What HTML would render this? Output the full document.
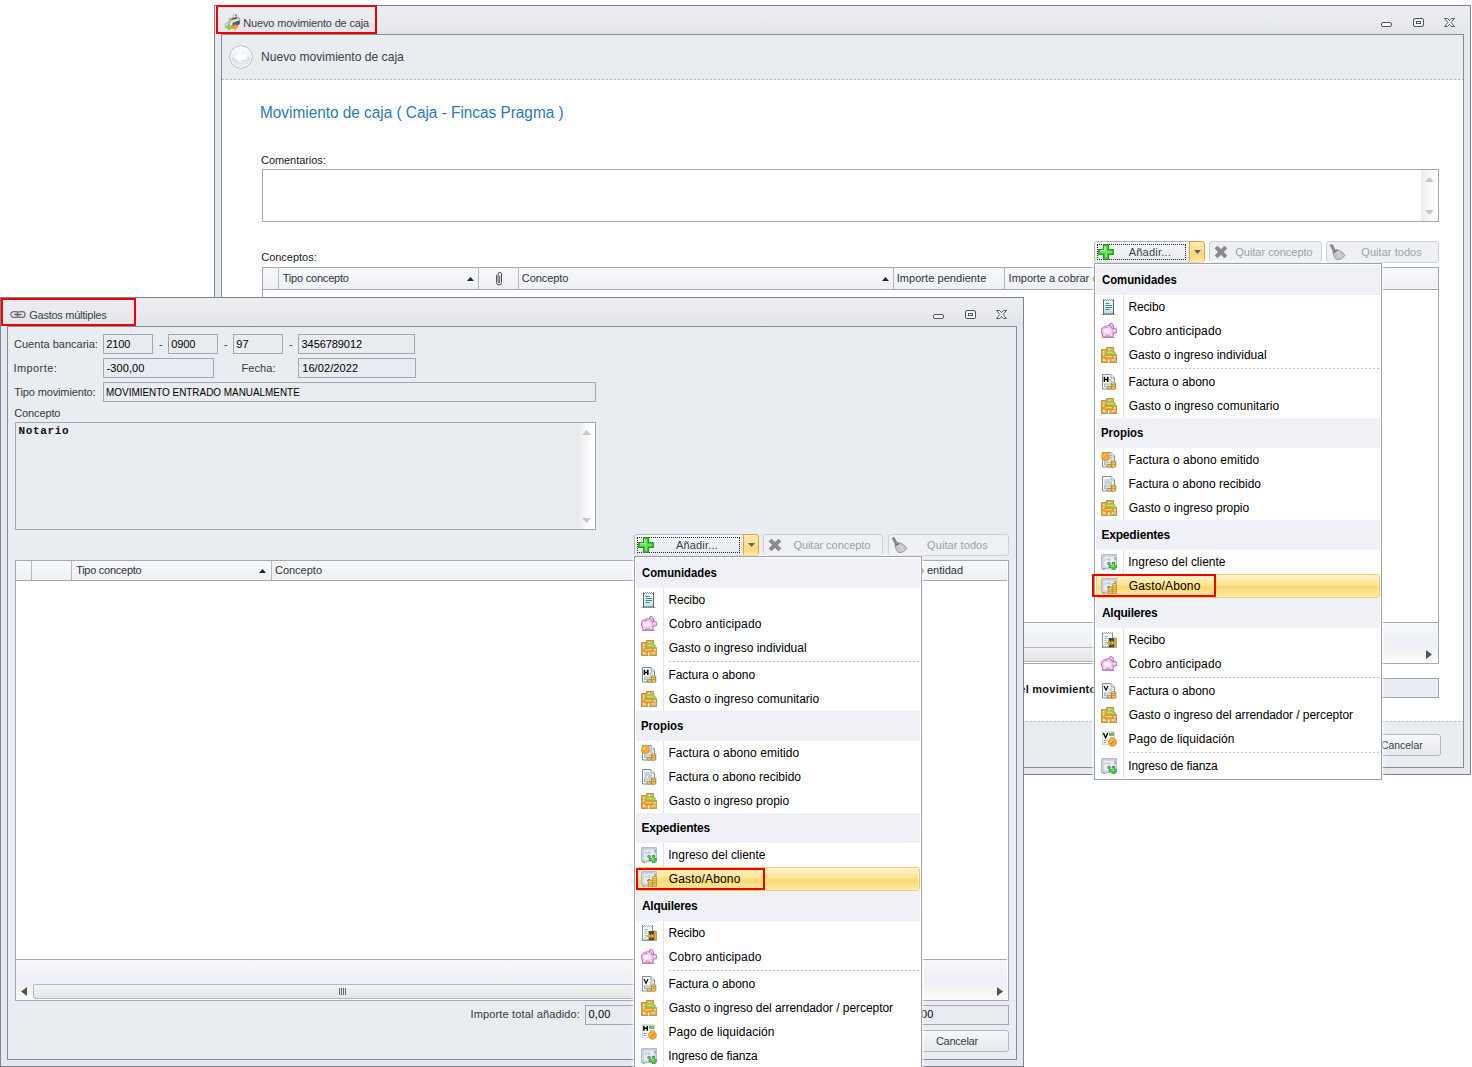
<!DOCTYPE html>
<html><head><meta charset="utf-8"><title>Nuevo movimiento de caja</title>
<style>
html,body{margin:0;padding:0;background:#fff;}
body{width:1472px;height:1067px;position:relative;overflow:hidden;font-family:"Liberation Sans",sans-serif;}
div,span,svg{position:absolute;box-sizing:border-box;}
.t{white-space:pre;line-height:1;}
.win{border:1px solid #7e848c;background:linear-gradient(#ecedf1 0px,#e9ebef 12px,#e2e5e9 27px,#e5e8ec 29px,#e5e8ec 100%);}
.inner{border:1px solid #888d95;background:#e9ecf0;overflow:hidden;}
.fld{border:1px solid #a2a8b1;background:#e8ebef;}
.grid{border:1px solid #a4aab3;background:#fff;overflow:hidden;}
.gh{background:linear-gradient(#f7f8fa,#eef0f4);border-bottom:1px solid #a4aab3;}
.gc{border-right:1px solid #b4bac3;top:0;height:100%;}
.btn{border:1px solid #b3b8c0;border-radius:3px;background:linear-gradient(#f8f9fb,#eef0f3 50%,#e6e9ed);}
.btnd{border:1px solid #cdd1d7;border-radius:3px;background:#eef0f3;}
.menu{border:1px solid #9da3ab;background:#fff;box-shadow:0 0 3px 1px rgba(255,255,255,.85);}
.mh{background:#eff1f6;}
.hl{border:1px solid #f3cd60;border-radius:3px;background:linear-gradient(#fef3cc,#fce392 45%,#fbd96f 55%,#fdeaa8);box-shadow:inset 0 0 0 1px rgba(255,255,255,.35);}
.sep{border-top:1px dashed #c5c9cf;height:0;}
.red{border:2px solid #f00000;}
</style></head>
<body>
<div class="win" style="left:214px;top:5px;width:1257px;height:770px;"><div style="left:9px;top:8px;width:17px;height:17px"><svg width="17" height="17" viewBox="0 0 16 16.5"><path d="M8.8 .5h3v4h-3z" fill="#eef1f6" stroke="#9aa3b3" stroke-width=".7"/><rect x="10.8" y="1" width="1.5" height="1.2" fill="#5d6675"/><path d="M4 5l8-2 3 1.5-8 2.5z" fill="#eccf72" stroke="#b48f2e" stroke-width=".7"/><path d="M7 5.2l5-1.3" stroke="#3d4a3a" stroke-width="1.4"/><path d="M1 9.5l6-3.5 8-2v5l-7 3.5-7 .5z" fill="#e3e8f0" stroke="#8f9bb0" stroke-width=".7"/><path d="M8 8.5l7-2.5v4l-7 3z" fill="#4e5a6b"/><path d="M3 9l1.5-.8M5 8l1.5-.8M4 10l1.5-.8" stroke="#8794a8" stroke-width=".8"/><path d="M1.5 12.5l3.5-3v2h3.2v2.5h-3.2v2z" fill="#9fd43e" stroke="#72a51f" stroke-width=".5"/><path d="M13.5 12.2l-3.5-3v2h-2.5v2.5h2.5v2z" fill="#f2a52e" stroke="#c47c15" stroke-width=".5"/></svg></div><span class="t" style="left:28.30px;top:12px;font-size:11px;color:#3a3f47;letter-spacing:-0.166px;">Nuevo movimiento de caja</span><div style="left:1166px;top:16px;width:11px;height:5px;border:1px solid #50555c;border-radius:2px;background:#fff;"></div><div style="left:1198px;top:12px;width:11px;height:9px;border:1px solid #50555c;border-radius:2px;background:#f4f5f7;"><div style="left:2px;top:2px;width:5px;height:3px;border:1px solid #50555c;background:#fff;"></div></div><svg style="left:1228px;top:11px" width="13" height="11" viewBox="0 0 13 11"><path d="M1.500 1.500h3l2 2.200 2-2.200h3l-3.500 4 3.500 4h-3l-2-2.200-2 2.200h-3l3.500-4z" fill="#fff" stroke="#50555c" stroke-width="1" stroke-linejoin="round"/></svg><div class="inner" style="left:6px;top:28px;width:1243px;height:734px;"><div style="left:0px;top:0px;width:1241px;height:45px;background:#e9ecf0;"></div><div style="left:0px;top:45px;width:1241px;height:641px;background:#fff;"></div><div style="left:0px;top:687px;width:1241px;height:50px;background:#e9ecf0;"></div><div style="left:0px;top:44px;width:1241px;height:1px;background:repeating-linear-gradient(90deg,#b4b9c0 0,#b4b9c0 2px,transparent 2px,transparent 4px);height:1px;"></div><div style="left:0px;top:686px;width:1241px;height:1px;background:repeating-linear-gradient(90deg,#b4b9c0 0,#b4b9c0 2px,transparent 2px,transparent 4px);height:1px;"></div><div style="left:7px;top:10px;width:24px;height:24px"><svg width="24" height="24" viewBox="0 0 24 24"><defs><linearGradient id="bg1" x1="0" y1="0" x2="0" y2="1"><stop offset="0" stop-color="#fbfcfd"/><stop offset=".5" stop-color="#eef1f5"/><stop offset=".52" stop-color="#dde4ec"/><stop offset="1" stop-color="#e9eef3"/></linearGradient></defs><circle cx="12" cy="12" r="11.2" fill="url(#bg1)" stroke="#b5bcc5" stroke-width="1"/><circle cx="12" cy="12" r="10.2" fill="none" stroke="#fff" stroke-width=".9" opacity=".9"/><path d="M5.5 12.3l6-5.3v3.2h6.2v4.2h-6.2v3.2z" fill="#b9c0c9" opacity=".8" transform="translate(.5 .9)"/><path d="M5.5 12.3l6-5.3v3.2h6.2v4.2h-6.2v3.2z" fill="#fff" stroke="#fff" stroke-width=".8" stroke-linejoin="round"/></svg></div><span class="t" style="left:39.03px;top:15px;font-size:13px;color:#3b3f46;transform:scaleX(0.9320);transform-origin:1.07px 0;">Nuevo movimiento de caja</span><span class="t" style="left:38.09px;top:70px;font-size:16px;color:#2a7ab8;transform:scaleX(0.9588);transform-origin:1.31px 0;">Movimiento de caja ( Caja - Fincas Pragma )</span><span class="t" style="left:39.04px;top:120px;font-size:11px;color:#1c1c1c;letter-spacing:-0.068px;">Comentarios:</span><div style="left:40px;top:134px;width:1177px;height:53px;border:1px solid #a2a8b1;background:#fff;"><div style="left:1158px;top:0px;width:17px;height:51px;background:linear-gradient(90deg,#ececee,#fafafa 60%,#fff);"></div><svg style="left:1162px;top:7px" width="9" height="5"><path d="M0 5l4.500-5 4.500 5z" fill="#c6c6c6"/></svg><svg style="left:1162px;top:40px" width="9" height="5"><path d="M0 0l4.500 5 4.500-5z" fill="#c6c6c6"/></svg></div><span class="t" style="left:39.24px;top:217px;font-size:11px;color:#1c1c1c;letter-spacing:-0.020px;">Conceptos:</span><div class="btn" style="left:872px;top:206px;width:96px;height:22px;border-radius:3px 0 0 3px;"><div style="left:2px;top:2px;width:89px;height:16px;border:1px dotted #222;"></div><div style="left:3px;top:2px;width:16px;height:16px"><svg width="16" height="16" viewBox="0 0 16 16"><path d="M5.5 .7h5v4.8h4.8v5h-4.8v4.8h-5v-4.8h-4.8v-5h4.8z" fill="#3fcb34" stroke="#1f9a1b" stroke-width="1.2" stroke-linejoin="round"/><path d="M7 2.2h2v4.8h4.8v2h-4.8v4.8h-2v-4.8h-4.8v-2h4.8z" fill="#8be67f" opacity=".75"/><path d="M6.7 2v4.7h-4.7" stroke="#c9f8bd" stroke-width="1" fill="none" opacity=".9"/></svg></div></div><div style="left:967px;top:206px;width:16px;height:22px;border:1px solid #e3a341;border-radius:0 3px 3px 0;background:linear-gradient(#ffebb0,#ffdf8c 48%,#ffd874 55%,#ffe398);"><svg style="left:4px;top:8px" width="8" height="5"><path d="M0 0h7l-3.500 4z" fill="#5b6270"/></svg></div><div class="btnd" style="left:987px;top:206px;width:113px;height:22px;"><div style="left:4px;top:3px;width:14px;height:14px"><svg width="14" height="14" viewBox="0 0 14 13.5"><path d="M1 3.2l2.5-2.5 3.5 3.5 3.5-3.5 2.5 2.5-3.5 3.5 3.5 3.5-2.5 2.5-3.5-3.5-3.5 3.5-2.5-2.5 3.5-3.5z" fill="#8a8a8a" stroke="#7d7d7d" stroke-width=".5"/></svg></div></div><div class="btnd" style="left:1104px;top:206px;width:113px;height:22px;"><div style="left:2px;top:2px;width:17px;height:17px"><svg width="17" height="17" viewBox="0 0 17 17"><path d="M1 1.2l2.2-1 3.3 6-2.2 1.2z" fill="#8b8b8b" stroke="#777" stroke-width=".5"/><path d="M3.8 7.8l3.8-2.2c3 .3 6.4 2.6 8.2 5.8-1.6 2.8-4.8 4.5-8.3 4.4-2-2-3.3-5-3.7-8z" fill="#c6c6c6" stroke="#8d8d8d" stroke-width=".8"/><path d="M4.3 8.6l3.8-2.2" stroke="#6f6f6f" stroke-width="1.3"/><path d="M8 8c2 1.5 3.5 3.5 4 6" stroke="#e2e2e2" stroke-width="1" fill="none"/></svg></div></div><span class="t" style="left:906.68px;top:212px;font-size:11px;color:#3a3f47;letter-spacing:0.233px;">Añadir...</span><span class="t" style="left:1013.28px;top:212px;font-size:11px;color:#9ba1ab;letter-spacing:-0.019px;">Quitar concepto</span><span class="t" style="left:1139.28px;top:212px;font-size:11px;color:#9ba1ab;letter-spacing:0.054px;">Quitar todos</span><div class="grid" style="left:40px;top:232px;width:1177px;height:397px;"><div class="gh" style="left:0px;top:0px;width:1175px;height:22px;"><div class="gc" style="left:0px;top:0px;width:16px;height:21px;"></div><div class="gc" style="left:16px;top:0px;width:200px;height:21px;"></div><div class="gc" style="left:216px;top:0px;width:40px;height:21px;"></div><div class="gc" style="left:256px;top:0px;width:375px;height:21px;"></div><div class="gc" style="left:631px;top:0px;width:111px;height:21px;"></div><span class="t" style="left:19.75px;top:5px;font-size:11px;color:#2f343b;letter-spacing:-0.208px;">Tipo concepto</span><span class="t" style="left:258.84px;top:5px;font-size:11px;color:#2f343b;letter-spacing:-0.067px;">Concepto</span><span class="t" style="left:633.68px;top:5px;font-size:11px;color:#2f343b;letter-spacing:0.058px;">Importe pendiente</span><span class="t" style="left:745.58px;top:5px;font-size:11px;color:#2f343b;">Importe a cobrar o pagar</span><svg style="left:204px;top:9px" width="7" height="4"><path d="M0 4l3.500-4 3.500 4z" fill="#222"/></svg><svg style="left:619px;top:9px" width="7" height="4"><path d="M0 4l3.500-4 3.500 4z" fill="#222"/></svg><div style="left:230px;top:3px;width:12px;height:15px"><svg width="12" height="15" viewBox="0 0 12 15"><path d="M3.5 4v7.5a2.5 2.5 0 0 0 5 0V3a1.7 1.7 0 0 0-3.4 0v8a.8.8 0 0 0 1.6 0V4.5" fill="none" stroke="#555" stroke-width="1"/></svg></div></div><div style="left:0px;top:354px;width:1175px;height:25px;border-top:1px solid #a4aab3;background:linear-gradient(#f5f7f9,#edf0f4);"></div><div style="left:0px;top:379px;width:1175px;height:16px;background:linear-gradient(#f1f1f2,#fcfcfc);"></div><div style="left:0px;top:379px;width:1040px;height:15px;border-right:1px solid #aeb3ba;border-radius:0 2px 2px 0;border-top:1px solid #aeb3ba;border-bottom:1px solid #aeb3ba;background:linear-gradient(#f2f2f2,#e4e4e4);"></div><svg style="left:1163px;top:382px" width="6" height="9"><path d="M0 0l6 4.500-6 4.500z" fill="#555"/></svg></div><span class="t" style="left:717.16px;top:649px;font-size:11px;color:#111;font-weight:700;letter-spacing:.25px;">Importe total del movimiento:</span><div class="fld" style="left:878px;top:643px;width:339px;height:20px;"></div><div class="btn" style="left:1143px;top:699px;width:76px;height:22px;"></div><span class="t" style="left:1159.14px;top:705px;font-size:11px;color:#3a3f47;transform:scaleX(0.9459);transform-origin:0.56px 0;">Cancelar</span></div></div>
<div class="red" style="left:216px;top:5px;width:161px;height:29px;"></div>
<div class="win" style="left:0px;top:297px;width:1024px;height:770px;"><div style="left:9px;top:13px;width:17px;height:8px"><svg width="16" height="7" viewBox="0 0 15.5 7"><rect x=".6" y=".6" width="8" height="5.8" rx="2.9" fill="#e6e6e6" stroke="#6e6e6e" stroke-width="1.2"/><rect x="6.9" y=".6" width="8" height="5.8" rx="2.9" fill="#e6e6e6" stroke="#6e6e6e" stroke-width="1.2"/><path d="M4.2 3.5h7" stroke="#5e5e5e" stroke-width="1.5"/></svg></div><span class="t" style="left:28.25px;top:12px;font-size:11px;color:#3a3f47;letter-spacing:-0.257px;">Gastos múltiples</span><div style="left:932px;top:16px;width:11px;height:5px;border:1px solid #50555c;border-radius:2px;background:#fff;"></div><div style="left:964px;top:12px;width:11px;height:9px;border:1px solid #50555c;border-radius:2px;background:#f4f5f7;"><div style="left:2px;top:2px;width:5px;height:3px;border:1px solid #50555c;background:#fff;"></div></div><svg style="left:994px;top:11px" width="13" height="11" viewBox="0 0 13 11"><path d="M1.500 1.500h3l2 2.200 2-2.200h3l-3.500 4 3.500 4h-3l-2-2.200-2 2.200h-3l3.500-4z" fill="#fff" stroke="#50555c" stroke-width="1" stroke-linejoin="round"/></svg><div class="inner" style="left:6px;top:28px;width:1010px;height:734px;"><span class="t" style="left:6.04px;top:12px;font-size:11px;color:#353a42;letter-spacing:0.012px;">Cuenta bancaria:</span><span class="t" style="left:5.58px;top:36px;font-size:11px;color:#353a42;letter-spacing:0.396px;">Importe:</span><span class="t" style="left:6.35px;top:60px;font-size:11px;color:#353a42;letter-spacing:-0.140px;">Tipo movimiento:</span><span class="t" style="left:6.24px;top:81px;font-size:11px;color:#353a42;letter-spacing:-0.124px;">Concepto</span><span class="t" style="left:233.60px;top:36px;font-size:11px;color:#353a42;letter-spacing:0.056px;">Fecha:</span><div class="fld" style="left:95px;top:7px;width:50px;height:20px;"></div><div class="fld" style="left:160px;top:7px;width:50px;height:20px;"></div><div class="fld" style="left:225px;top:7px;width:50px;height:20px;"></div><div class="fld" style="left:290px;top:7px;width:117px;height:20px;"></div><div class="fld" style="left:95px;top:31px;width:111px;height:20px;"></div><div class="fld" style="left:290px;top:31px;width:118px;height:20px;"></div><div class="fld" style="left:95px;top:55px;width:493px;height:20px;"></div><span class="t" style="left:98.35px;top:12px;font-size:11px;color:#000;letter-spacing:-0.163px;">2100</span><span class="t" style="left:163.17px;top:12px;font-size:11px;color:#000;letter-spacing:-0.070px;">0900</span><span class="t" style="left:228.28px;top:12px;font-size:11px;color:#000;">97</span><span class="t" style="left:293.58px;top:12px;font-size:11px;color:#000;letter-spacing:-0.078px;">3456789012</span><span class="t" style="left:98.41px;top:36px;font-size:11px;color:#000;letter-spacing:0.118px;">-300,00</span><span class="t" style="left:294.16px;top:36px;font-size:11px;color:#000;letter-spacing:0.104px;">16/02/2022</span><span class="t" style="left:97.60px;top:60px;font-size:11px;color:#000;transform:scaleX(0.9012);transform-origin:0.90px 0;">MOVIMIENTO ENTRADO MANUALMENTE</span><span class="t" style="left:151.01px;top:12px;font-size:11px;color:#353a42;">-</span><span class="t" style="left:216.01px;top:12px;font-size:11px;color:#353a42;">-</span><span class="t" style="left:281.01px;top:12px;font-size:11px;color:#353a42;">-</span><div style="left:7px;top:95px;width:581px;height:108px;border:1px solid #a2a8b1;background:#e8ebef;"><div style="left:562px;top:0px;width:17px;height:106px;background:linear-gradient(90deg,#e8ebef,#f7f8f9 50%,#fff 80%);"></div><svg style="left:566px;top:7px" width="9" height="5"><path d="M0 5l4.500-5 4.500 5z" fill="#c6c6c6"/></svg><svg style="left:566px;top:95px" width="9" height="5"><path d="M0 0l4.500 5 4.500-5z" fill="#c6c6c6"/></svg><span class="t" style="left:2.47px;top:3px;font-size:11px;color:#111;font-weight:700;font-family:'Liberation Mono',monospace;letter-spacing:0.635px;">Notario</span></div><div class="btn" style="left:626px;top:207px;width:110px;height:22px;border-radius:3px 0 0 3px;"><div style="left:2px;top:2px;width:103px;height:16px;border:1px dotted #222;"></div><div style="left:3px;top:2px;width:16px;height:16px"><svg width="16" height="16" viewBox="0 0 16 16"><path d="M5.5 .7h5v4.8h4.8v5h-4.8v4.8h-5v-4.8h-4.8v-5h4.8z" fill="#3fcb34" stroke="#1f9a1b" stroke-width="1.2" stroke-linejoin="round"/><path d="M7 2.2h2v4.8h4.8v2h-4.8v4.8h-2v-4.8h-4.8v-2h4.8z" fill="#8be67f" opacity=".75"/><path d="M6.7 2v4.7h-4.7" stroke="#c9f8bd" stroke-width="1" fill="none" opacity=".9"/></svg></div></div><div style="left:735px;top:207px;width:16px;height:22px;border:1px solid #e3a341;border-radius:0 3px 3px 0;background:linear-gradient(#ffebb0,#ffdf8c 48%,#ffd874 55%,#ffe398);"><svg style="left:4px;top:8px" width="8" height="5"><path d="M0 0h7l-3.500 4z" fill="#5b6270"/></svg></div><div class="btnd" style="left:755px;top:207px;width:120px;height:22px;"><div style="left:4px;top:3px;width:14px;height:14px"><svg width="14" height="14" viewBox="0 0 14 13.5"><path d="M1 3.2l2.5-2.5 3.5 3.5 3.5-3.5 2.5 2.5-3.5 3.5 3.5 3.5-2.5 2.5-3.5-3.5-3.5 3.5-2.5-2.5 3.5-3.5z" fill="#8a8a8a" stroke="#7d7d7d" stroke-width=".5"/></svg></div></div><div class="btnd" style="left:880px;top:207px;width:121px;height:22px;"><div style="left:2px;top:2px;width:17px;height:17px"><svg width="17" height="17" viewBox="0 0 17 17"><path d="M1 1.2l2.2-1 3.3 6-2.2 1.2z" fill="#8b8b8b" stroke="#777" stroke-width=".5"/><path d="M3.8 7.8l3.8-2.2c3 .3 6.4 2.6 8.2 5.8-1.6 2.8-4.8 4.5-8.3 4.4-2-2-3.3-5-3.7-8z" fill="#c6c6c6" stroke="#8d8d8d" stroke-width=".8"/><path d="M4.3 8.6l3.8-2.2" stroke="#6f6f6f" stroke-width="1.3"/><path d="M8 8c2 1.5 3.5 3.5 4 6" stroke="#e2e2e2" stroke-width="1" fill="none"/></svg></div></div><span class="t" style="left:667.88px;top:213px;font-size:11px;color:#3a3f47;letter-spacing:0.183px;">Añadir...</span><span class="t" style="left:785.38px;top:213px;font-size:11px;color:#9ba1ab;letter-spacing:-0.041px;">Quitar concepto</span><span class="t" style="left:919.08px;top:213px;font-size:11px;color:#9ba1ab;letter-spacing:0.073px;">Quitar todos</span><div class="grid" style="left:7px;top:233px;width:994px;height:441px;"><div class="gh" style="left:0px;top:0px;width:991px;height:20px;"><div class="gc" style="left:0px;top:0px;width:16px;height:19px;"></div><div class="gc" style="left:16px;top:0px;width:40px;height:19px;"></div><div class="gc" style="left:56px;top:0px;width:200px;height:19px;"></div><div class="gc" style="left:256px;top:0px;width:600px;height:19px;"></div><span class="t" style="left:60.15px;top:4px;font-size:11px;color:#2f343b;letter-spacing:-0.266px;">Tipo concepto</span><span class="t" style="left:258.94px;top:4px;font-size:11px;color:#2f343b;">Concepto</span><span class="t" style="left:886.90px;top:4px;font-size:11px;color:#2f343b;">Tipo entidad</span><svg style="left:243px;top:8px" width="7" height="4"><path d="M0 4l3.500-4 3.500 4z" fill="#222"/></svg></div><div style="left:0px;top:398px;width:991px;height:25px;border-top:1px solid #a4aab3;background:linear-gradient(#f5f7f9,#edf0f4);"></div><div style="left:0px;top:423px;width:991px;height:16px;background:linear-gradient(#f1f1f2,#fcfcfc);"></div><div style="left:17px;top:423px;width:700px;height:15px;border:1px solid #b3b7be;border-radius:2px;background:linear-gradient(#f3f3f3,#e5e5e5);"></div><svg style="left:5px;top:426px" width="6" height="9"><path d="M6 0l-6 4.500 6 4.500z" fill="#555"/></svg><svg style="left:981px;top:426px" width="6" height="9"><path d="M0 0l6 4.500-6 4.500z" fill="#555"/></svg><svg style="left:323px;top:427px" width="8" height="7"><path d="M.5 0v7M2.500 0v7M4.500 0v7M6.500 0v7" stroke="#666" stroke-width="1"/></svg></div><span class="t" style="left:462.48px;top:682px;font-size:11px;color:#353a42;letter-spacing:0.144px;">Importe total añadido:</span><div class="fld" style="left:577px;top:678px;width:120px;height:20px;"></div><span class="t" style="left:580.57px;top:682px;font-size:11px;color:#000;letter-spacing:0.117px;">0,00</span><div class="fld" style="left:881px;top:678px;width:120px;height:20px;"></div><span class="t" style="left:903.67px;top:682px;font-size:11px;color:#000;letter-spacing:0.117px;">0,00</span><div class="btn" style="left:897px;top:703px;width:104px;height:22px;"></div><span class="t" style="left:927.94px;top:709px;font-size:11px;color:#3a3f47;letter-spacing:-0.269px;">Cancelar</span></div></div>
<div class="red" style="left:1px;top:298px;width:135px;height:28px;"></div>
<div class="menu" style="left:1094px;top:263px;width:288px;height:517px;"><div style="left:-1px;top:-1px;width:0;height:0"><div class="mh" style="left:2px;top:2px;width:284px;height:30px;"></div><span class="t" style="left:7.71px;top:11px;font-size:12px;color:#000;font-weight:700;transform:scaleX(0.9426);transform-origin:0.49px 0;">Comunidades</span><div style="left:29px;top:32px;width:1px;height:24px;background:#e1e4e8;"></div><div style="left:7px;top:36px;width:16px;height:16px"><svg width="16" height="16" viewBox="0 0 16 16"><defs><linearGradient id="g1" x1="0" y1="0" x2="0" y2="1"><stop offset="0" stop-color="#f7fcfc"/><stop offset="1" stop-color="#c0dfdf"/></linearGradient></defs><ellipse cx="7.5" cy="15.5" rx="7.5" ry=".6" fill="#444" opacity=".55"/><path d="M2.5 .5l1 1 1-1 1 1 1-1 1 1 1-1 1 1 1-1 1 1 1-1v14.8l-1-1-1 1-1-1-1 1-1-1-1 1-1-1-1 1-1-1-1 1z" fill="url(#g1)" stroke="#566c6c" stroke-width="1" stroke-linejoin="round"/><path d="M4.5 4.5h4M4.5 6.5h6.5M4.5 8.5h6.5M4.5 10.5h4" stroke="#3f8a8a" stroke-width="1.1"/></svg></div><span class="t" style="left:34.42px;top:38px;font-size:12px;color:#000;letter-spacing:-0.133px;">Recibo</span><div style="left:29px;top:56px;width:1px;height:24px;background:#e1e4e8;"></div><div style="left:7px;top:60px;width:16px;height:16px"><svg width="16" height="16" viewBox="0 0 16 16"><defs><radialGradient id="g2" cx=".45" cy=".45" r=".6"><stop offset="0" stop-color="#fcf2fb"/><stop offset="1" stop-color="#e69fd8"/></radialGradient></defs><ellipse cx="7.5" cy="14.5" rx="7" ry=".6" fill="#444" opacity=".5"/><g fill="#c265b3" stroke="#c265b3" stroke-width="1.5"><ellipse cx="6.8" cy="8" rx="6.3" ry="4.9"/><circle cx="13.6" cy="7.8" r="2"/><ellipse cx="10.6" cy="3.2" rx="1.5" ry="2.5" transform="rotate(-28 10.6 3.2)"/><rect x="1.8" y="10" width="3.6" height="3.8" rx="1"/><rect x="8.3" y="10" width="3.6" height="3.8" rx="1"/></g><g fill="url(#g2)"><ellipse cx="6.8" cy="8" rx="6.3" ry="4.9"/><circle cx="13.6" cy="7.8" r="2"/><ellipse cx="10.6" cy="3.2" rx="1.5" ry="2.5" transform="rotate(-28 10.6 3.2)"/><rect x="1.8" y="10" width="3.6" height="3.8" rx="1"/><rect x="8.3" y="10" width="3.6" height="3.8" rx="1"/></g><ellipse cx="6.5" cy="8.5" rx="4" ry="2.8" fill="#fff" opacity=".55"/><path d="M9.5 2.5l2.3 3.8" stroke="#c265b3" stroke-width=".9"/><path d="M3.8 4.6h2.6" stroke="#c876bd" stroke-width="1"/></svg></div><span class="t" style="left:34.79px;top:62px;font-size:12px;color:#000;letter-spacing:0.126px;">Cobro anticipado</span><div style="left:29px;top:80px;width:1px;height:24px;background:#e1e4e8;"></div><div style="left:7px;top:84px;width:16px;height:16px"><svg width="16" height="16" viewBox="0 0 16 16"><path d="M.5 2.5h5v-2h7v7h3v8h-15z" fill="#dcab58" stroke="#c79238" stroke-width="1" stroke-linejoin="round"/><path d="M2 5h1.5M2 8h1.5M2 13h3M11 13h1.5M13.5 13h1M13 10h1.5M7.5 2.5h1.5M10.5 2.5h1M2 10.5h1" stroke="#f6e6c2" stroke-width="1.6"/><rect x="7" y="12.5" width="1.3" height="3" fill="#fff"/><path d="M5.5 4.3h5.3v-1.6l4.2 3-4.2 3v-1.6h-5.3z" fill="#a3d843" stroke="#7fb52a" stroke-width=".6" stroke-linejoin="round"/><path d="M6 5.2h5" stroke="#d4f09a" stroke-width=".8"/><path d="M11.5 8.6h-5.8v-1.6l-4.2 3 4.2 3v-1.6h5.8z" fill="#f3a92f" stroke="#d4861c" stroke-width=".6" stroke-linejoin="round"/><path d="M5 9.5h6" stroke="#fbd88a" stroke-width=".8"/></svg></div><span class="t" style="left:34.80px;top:86px;font-size:12px;color:#000;letter-spacing:-0.011px;">Gasto o ingreso individual</span><div style="left:29px;top:104px;width:1px;height:3px;background:#e1e4e8;"></div><div style="left:35px;top:105px;width:250px;height:1px;background:repeating-linear-gradient(90deg,#c2c6cc 0,#c2c6cc 2px,transparent 2px,transparent 4px);"></div><div style="left:29px;top:107px;width:1px;height:24px;background:#e1e4e8;"></div><div style="left:7px;top:111px;width:16px;height:16px"><svg width="16" height="16" viewBox="0 0 16 16"><path d="M1.5 .5h8.5l3.5 3.5v11h-12z" fill="#f2f7f8" stroke="#7d9297" stroke-width="1" stroke-linejoin="round"/><path d="M10 .8v3.2h3.2" fill="#fff" stroke="#7d9297" stroke-width=".8"/><rect x="3.5" y="10" width="7" height="2.6" fill="#d3e3ea" stroke="#8ea3a8" stroke-width=".7"/><path d="M3.4 2.8v5.2M6.8 2.8v5.2M3.4 5.4h3.4" stroke="#000" stroke-width="1.5"/><path d="M8.5 6h3M8.5 8h3" stroke="#8b9ea2" stroke-width=".9"/><rect x="10.20" y="8.95" width="4.80" height="2.1" rx="1.05" fill="#f0c655" stroke="#a5761b" stroke-width=".8"/><path d="M11.20 9.85h2.80" stroke="#fbe7a6" stroke-width=".7"/><rect x="10.20" y="10.95" width="4.80" height="2.1" rx="1.05" fill="#f0c655" stroke="#a5761b" stroke-width=".8"/><path d="M11.20 11.85h2.80" stroke="#fbe7a6" stroke-width=".7"/><rect x="10.20" y="12.95" width="4.80" height="2.1" rx="1.05" fill="#f0c655" stroke="#a5761b" stroke-width=".8"/><path d="M11.20 13.85h2.80" stroke="#fbe7a6" stroke-width=".7"/><rect x="5.90" y="12.95" width="4.60" height="2.1" rx="1.05" fill="#f0c655" stroke="#a5761b" stroke-width=".8"/><path d="M6.90 13.85h2.60" stroke="#fbe7a6" stroke-width=".7"/></svg></div><span class="t" style="left:34.42px;top:113px;font-size:12px;color:#000;letter-spacing:-0.050px;">Factura o abono</span><div style="left:29px;top:131px;width:1px;height:24px;background:#e1e4e8;"></div><div style="left:7px;top:135px;width:16px;height:16px"><svg width="16" height="16" viewBox="0 0 16 16"><path d="M.5 2.5h5v-2h7v7h3v8h-15z" fill="#dcab58" stroke="#c79238" stroke-width="1" stroke-linejoin="round"/><path d="M2 5h1.5M2 8h1.5M2 13h3M11 13h1.5M13.5 13h1M13 10h1.5M7.5 2.5h1.5M10.5 2.5h1M2 10.5h1" stroke="#f6e6c2" stroke-width="1.6"/><rect x="7" y="12.5" width="1.3" height="3" fill="#fff"/><path d="M5.5 4.3h5.3v-1.6l4.2 3-4.2 3v-1.6h-5.3z" fill="#a3d843" stroke="#7fb52a" stroke-width=".6" stroke-linejoin="round"/><path d="M6 5.2h5" stroke="#d4f09a" stroke-width=".8"/><path d="M11.5 8.6h-5.8v-1.6l-4.2 3 4.2 3v-1.6h5.8z" fill="#f3a92f" stroke="#d4861c" stroke-width=".6" stroke-linejoin="round"/><path d="M5 9.5h6" stroke="#fbd88a" stroke-width=".8"/></svg></div><span class="t" style="left:34.80px;top:137px;font-size:12px;color:#000;letter-spacing:0.013px;">Gasto o ingreso comunitario</span><div class="mh" style="left:2px;top:155px;width:284px;height:30px;"></div><span class="t" style="left:7.40px;top:164px;font-size:12px;color:#000;font-weight:700;transform:scaleX(0.9468);transform-origin:0.80px 0;">Propios</span><div style="left:29px;top:185px;width:1px;height:24px;background:#e1e4e8;"></div><div style="left:7px;top:189px;width:16px;height:16px"><svg width="16" height="16" viewBox="0 0 16 16"><defs><radialGradient id="g3" cx=".45" cy=".45" r=".6"><stop offset="0" stop-color="#ffd257"/><stop offset="1" stop-color="#f08d1c"/></radialGradient></defs><path d="M1.5 .5h8.5l3.5 3.5v11h-12z" fill="#f2f7f8" stroke="#7d9297" stroke-width="1" stroke-linejoin="round"/><path d="M10 .8v3.2h3.2" fill="#fff" stroke="#7d9297" stroke-width=".8"/><rect x="3.5" y="10" width="7" height="2.6" fill="#d3e3ea" stroke="#8ea3a8" stroke-width=".7"/><path d="M8.5 6h3M8.5 8h3" stroke="#8b9ea2" stroke-width=".9"/><rect x="10.20" y="8.95" width="4.80" height="2.1" rx="1.05" fill="#f0c655" stroke="#a5761b" stroke-width=".8"/><path d="M11.20 9.85h2.80" stroke="#fbe7a6" stroke-width=".7"/><rect x="10.20" y="10.95" width="4.80" height="2.1" rx="1.05" fill="#f0c655" stroke="#a5761b" stroke-width=".8"/><path d="M11.20 11.85h2.80" stroke="#fbe7a6" stroke-width=".7"/><rect x="10.20" y="12.95" width="4.80" height="2.1" rx="1.05" fill="#f0c655" stroke="#a5761b" stroke-width=".8"/><path d="M11.20 13.85h2.80" stroke="#fbe7a6" stroke-width=".7"/><rect x="5.90" y="12.95" width="4.60" height="2.1" rx="1.05" fill="#f0c655" stroke="#a5761b" stroke-width=".8"/><path d="M6.90 13.85h2.60" stroke="#fbe7a6" stroke-width=".7"/><circle cx="4.5" cy="4.5" r="4.3" fill="url(#g3)" stroke="#e48a1e" stroke-width=".8" stroke-dasharray="1.7 .5"/><path d="M2.5 6l3.8-3.2" stroke="#d98a10" stroke-width="1.3"/><path d="M2.8 5.3l3-2.5" stroke="#ffe9a0" stroke-width=".6"/></svg></div><span class="t" style="left:34.42px;top:191px;font-size:12px;color:#000;letter-spacing:0.063px;">Factura o abono emitido</span><div style="left:29px;top:209px;width:1px;height:24px;background:#e1e4e8;"></div><div style="left:7px;top:213px;width:16px;height:16px"><svg width="16" height="16" viewBox="0 0 16 16"><path d="M1.5 .5h8.5l3.5 3.5v11h-12z" fill="#f2f7f8" stroke="#7d9297" stroke-width="1" stroke-linejoin="round"/><path d="M10 .8v3.2h3.2" fill="#fff" stroke="#7d9297" stroke-width=".8"/><rect x="3.5" y="10" width="7" height="2.6" fill="#d3e3ea" stroke="#8ea3a8" stroke-width=".7"/><path d="M3.5 4h1M5.5 4h3M3.5 6h7.5M3.5 8h2.5M7 8h4" stroke="#8b9ea2" stroke-width=".9"/><rect x="10.20" y="8.95" width="4.80" height="2.1" rx="1.05" fill="#f0c655" stroke="#a5761b" stroke-width=".8"/><path d="M11.20 9.85h2.80" stroke="#fbe7a6" stroke-width=".7"/><rect x="10.20" y="10.95" width="4.80" height="2.1" rx="1.05" fill="#f0c655" stroke="#a5761b" stroke-width=".8"/><path d="M11.20 11.85h2.80" stroke="#fbe7a6" stroke-width=".7"/><rect x="10.20" y="12.95" width="4.80" height="2.1" rx="1.05" fill="#f0c655" stroke="#a5761b" stroke-width=".8"/><path d="M11.20 13.85h2.80" stroke="#fbe7a6" stroke-width=".7"/><rect x="5.90" y="12.95" width="4.60" height="2.1" rx="1.05" fill="#f0c655" stroke="#a5761b" stroke-width=".8"/><path d="M6.90 13.85h2.60" stroke="#fbe7a6" stroke-width=".7"/></svg></div><span class="t" style="left:34.42px;top:215px;font-size:12px;color:#000;letter-spacing:-0.007px;">Factura o abono recibido</span><div style="left:29px;top:233px;width:1px;height:24px;background:#e1e4e8;"></div><div style="left:7px;top:237px;width:16px;height:16px"><svg width="16" height="16" viewBox="0 0 16 16"><path d="M.5 2.5h5v-2h7v7h3v8h-15z" fill="#dcab58" stroke="#c79238" stroke-width="1" stroke-linejoin="round"/><path d="M2 5h1.5M2 8h1.5M2 13h3M11 13h1.5M13.5 13h1M13 10h1.5M7.5 2.5h1.5M10.5 2.5h1M2 10.5h1" stroke="#f6e6c2" stroke-width="1.6"/><rect x="7" y="12.5" width="1.3" height="3" fill="#fff"/><path d="M5.5 4.3h5.3v-1.6l4.2 3-4.2 3v-1.6h-5.3z" fill="#a3d843" stroke="#7fb52a" stroke-width=".6" stroke-linejoin="round"/><path d="M6 5.2h5" stroke="#d4f09a" stroke-width=".8"/><path d="M11.5 8.6h-5.8v-1.6l-4.2 3 4.2 3v-1.6h5.8z" fill="#f3a92f" stroke="#d4861c" stroke-width=".6" stroke-linejoin="round"/><path d="M5 9.5h6" stroke="#fbd88a" stroke-width=".8"/></svg></div><span class="t" style="left:34.80px;top:239px;font-size:12px;color:#000;letter-spacing:-0.052px;">Gasto o ingreso propio</span><div class="mh" style="left:2px;top:257px;width:284px;height:30px;"></div><span class="t" style="left:7.40px;top:266px;font-size:12px;color:#000;font-weight:700;letter-spacing:-0.180px;">Expedientes</span><div style="left:29px;top:287px;width:1px;height:24px;background:#e1e4e8;"></div><div style="left:7px;top:291px;width:16px;height:16px"><svg width="16" height="16" viewBox="0 0 16 16"><rect x=".7" y=".7" width="14.8" height="13.8" rx=".8" fill="#dfe3ea" stroke="#b4bccb" stroke-width="1.4"/><rect x="2.3" y="2.3" width="11.6" height="10.6" fill="#e9ecf1" stroke="#c9cfda" stroke-width=".7"/><path d="M3.5 4.2l2 1.3-2 1.3M5.5 5.5h3.8l-1.8-1.2M9.3 5.5l-1.8 1.2" stroke="#bcc3cf" stroke-width=".9" fill="none"/><circle cx="8" cy="9.6" r="1.8" fill="#7c819c"/><circle cx="7.6" cy="9.2" r=".7" fill="#9aa0b8"/><rect x="13.4" y="3" width="1.5" height="2.6" fill="#9aa2b3"/><path d="M1.5 15.2h2.5M12.5 15.2h2.5" stroke="#8f97a8" stroke-width="1"/><path d="M12.4 9.3v6.4M9.2 12.5h6.4" stroke="#2a9b2a" stroke-width="3.2" stroke-linecap="round"/><path d="M12.4 9.8v5.4M9.7 12.5h5.4" stroke="#4fd44a" stroke-width="1.8" stroke-linecap="round"/><path d="M12 10.2v2h-2" stroke="#b2f2a8" stroke-width=".7" fill="none"/></svg></div><span class="t" style="left:34.29px;top:293px;font-size:12px;color:#000;letter-spacing:-0.009px;">Ingreso del cliente</span><div style="left:29px;top:311px;width:1px;height:24px;background:#e1e4e8;"></div><div class="hl" style="left:2px;top:311px;width:284px;height:24px;"></div><div style="left:7px;top:315px;width:16px;height:16px"><svg width="16" height="16" viewBox="0 0 16 16"><rect x=".7" y=".7" width="14.8" height="13.8" rx=".8" fill="#dfe3ea" stroke="#b4bccb" stroke-width="1.4"/><rect x="2.3" y="2.3" width="11.6" height="10.6" fill="#e9ecf1" stroke="#c9cfda" stroke-width=".7"/><path d="M3.5 4.2l2 1.3-2 1.3M5.5 5.5h3.8l-1.8-1.2M9.3 5.5l-1.8 1.2" stroke="#bcc3cf" stroke-width=".9" fill="none"/><circle cx="8" cy="9.6" r="1.8" fill="#7c819c"/><circle cx="7.6" cy="9.2" r=".7" fill="#9aa0b8"/><rect x="13.4" y="3" width="1.5" height="2.6" fill="#9aa2b3"/><path d="M1.5 15.2h2.5M12.5 15.2h2.5" stroke="#8f97a8" stroke-width="1"/><rect x="11.2" y="13.5" width="4.6" height="2.4" rx="1.2" fill="#f2c753" stroke="#b17f1d" stroke-width=".7"/><path d="M12.2 14.4h2.5999999999999996" stroke="#fde9a8" stroke-width=".6"/><rect x="11.2" y="11.5" width="4.6" height="2.4" rx="1.2" fill="#f2c753" stroke="#b17f1d" stroke-width=".7"/><path d="M12.2 12.4h2.5999999999999996" stroke="#fde9a8" stroke-width=".6"/><rect x="11.2" y="9.5" width="4.6" height="2.4" rx="1.2" fill="#f2c753" stroke="#b17f1d" stroke-width=".7"/><path d="M12.2 10.4h2.5999999999999996" stroke="#fde9a8" stroke-width=".6"/><rect x="11.2" y="7.5" width="4.6" height="2.4" rx="1.2" fill="#f2c753" stroke="#b17f1d" stroke-width=".7"/><path d="M12.2 8.4h2.5999999999999996" stroke="#fde9a8" stroke-width=".6"/><rect x="11.2" y="5.5" width="4.6" height="2.4" rx="1.2" fill="#f2c753" stroke="#b17f1d" stroke-width=".7"/><path d="M12.2 6.4h2.5999999999999996" stroke="#fde9a8" stroke-width=".6"/><rect x="7" y="13.5" width="4.6" height="2.4" rx="1.2" fill="#f2c753" stroke="#b17f1d" stroke-width=".7"/><path d="M8 14.4h2.5999999999999996" stroke="#fde9a8" stroke-width=".6"/><rect x="7" y="11.5" width="4.6" height="2.4" rx="1.2" fill="#f2c753" stroke="#b17f1d" stroke-width=".7"/><path d="M8 12.4h2.5999999999999996" stroke="#fde9a8" stroke-width=".6"/><rect x="7" y="9.5" width="4.6" height="2.4" rx="1.2" fill="#f2c753" stroke="#b17f1d" stroke-width=".7"/><path d="M8 10.4h2.5999999999999996" stroke="#fde9a8" stroke-width=".6"/></svg></div><span class="t" style="left:34.80px;top:317px;font-size:12px;color:#000;letter-spacing:0.146px;">Gasto/Abono</span><div class="mh" style="left:2px;top:335px;width:284px;height:30px;"></div><span class="t" style="left:7.90px;top:344px;font-size:12px;color:#000;font-weight:700;letter-spacing:-0.248px;">Alquileres</span><div style="left:29px;top:365px;width:1px;height:24px;background:#e1e4e8;"></div><div style="left:7px;top:369px;width:16px;height:16px"><svg width="16" height="16" viewBox="0 0 16 16"><ellipse cx="7.5" cy="15.5" rx="7.5" ry=".6" fill="#444" opacity=".5"/><path d="M1.5 .5l1 1 1-1 1 1 1-1 1 1 1-1 1 1 1-1 1 1 1-1v14.8l-1-1-1 1-1-1-1 1-1-1-1 1-1-1-1 1-1-1-1 1z" fill="#f1f7f7" stroke="#7b9090" stroke-width=".9" stroke-linejoin="round"/><path d="M3.5 4.5h3.5M3.5 6.5h3M3.5 8.5h2M3.5 10.5h2M3.5 12.5h2" stroke="#94b5b5" stroke-width=".9"/><rect x="8" y="6.5" width="5" height="8.3" fill="#3c4048" stroke="#23262b" stroke-width=".6"/><path d="M13 5.5l2.5 1v9l-2.5-.7z" fill="#e3a24b" stroke="#b87728" stroke-width=".6"/><path d="M9 8.6l-3.5 2.4 3.5 2.4v-1.4h1.5v-2h-1.5z" fill="#f59a1e" stroke="#cf7a10" stroke-width=".4"/><path d="M10.5 8.6l3 2.4-3 2.4z" fill="#a2dc3c" stroke="#79b424" stroke-width=".4"/></svg></div><span class="t" style="left:34.42px;top:371px;font-size:12px;color:#000;letter-spacing:-0.133px;">Recibo</span><div style="left:29px;top:389px;width:1px;height:24px;background:#e1e4e8;"></div><div style="left:7px;top:393px;width:16px;height:16px"><svg width="16" height="16" viewBox="0 0 16 16"><defs><radialGradient id="g2" cx=".45" cy=".45" r=".6"><stop offset="0" stop-color="#fcf2fb"/><stop offset="1" stop-color="#e69fd8"/></radialGradient></defs><ellipse cx="7.5" cy="14.5" rx="7" ry=".6" fill="#444" opacity=".5"/><g fill="#c265b3" stroke="#c265b3" stroke-width="1.5"><ellipse cx="6.8" cy="8" rx="6.3" ry="4.9"/><circle cx="13.6" cy="7.8" r="2"/><ellipse cx="10.6" cy="3.2" rx="1.5" ry="2.5" transform="rotate(-28 10.6 3.2)"/><rect x="1.8" y="10" width="3.6" height="3.8" rx="1"/><rect x="8.3" y="10" width="3.6" height="3.8" rx="1"/></g><g fill="url(#g2)"><ellipse cx="6.8" cy="8" rx="6.3" ry="4.9"/><circle cx="13.6" cy="7.8" r="2"/><ellipse cx="10.6" cy="3.2" rx="1.5" ry="2.5" transform="rotate(-28 10.6 3.2)"/><rect x="1.8" y="10" width="3.6" height="3.8" rx="1"/><rect x="8.3" y="10" width="3.6" height="3.8" rx="1"/></g><ellipse cx="6.5" cy="8.5" rx="4" ry="2.8" fill="#fff" opacity=".55"/><path d="M9.5 2.5l2.3 3.8" stroke="#c265b3" stroke-width=".9"/><path d="M3.8 4.6h2.6" stroke="#c876bd" stroke-width="1"/></svg></div><span class="t" style="left:34.79px;top:395px;font-size:12px;color:#000;letter-spacing:0.126px;">Cobro anticipado</span><div style="left:29px;top:413px;width:1px;height:3px;background:#e1e4e8;"></div><div style="left:35px;top:414px;width:250px;height:1px;background:repeating-linear-gradient(90deg,#c2c6cc 0,#c2c6cc 2px,transparent 2px,transparent 4px);"></div><div style="left:29px;top:416px;width:1px;height:24px;background:#e1e4e8;"></div><div style="left:7px;top:420px;width:16px;height:16px"><svg width="16" height="16" viewBox="0 0 16 16"><path d="M1.5 .5h8.5l3.5 3.5v11h-12z" fill="#f2f7f8" stroke="#7d9297" stroke-width="1" stroke-linejoin="round"/><path d="M10 .8v3.2h3.2" fill="#fff" stroke="#7d9297" stroke-width=".8"/><rect x="3.5" y="10" width="7" height="2.6" fill="#d3e3ea" stroke="#8ea3a8" stroke-width=".7"/><path d="M3 3l2 4.3 2-4.3" stroke="#000" stroke-width="1.1" fill="none"/><path d="M8.5 6h3M8.5 8h3" stroke="#8b9ea2" stroke-width=".9"/><rect x="10.20" y="8.95" width="4.80" height="2.1" rx="1.05" fill="#f0c655" stroke="#a5761b" stroke-width=".8"/><path d="M11.20 9.85h2.80" stroke="#fbe7a6" stroke-width=".7"/><rect x="10.20" y="10.95" width="4.80" height="2.1" rx="1.05" fill="#f0c655" stroke="#a5761b" stroke-width=".8"/><path d="M11.20 11.85h2.80" stroke="#fbe7a6" stroke-width=".7"/><rect x="10.20" y="12.95" width="4.80" height="2.1" rx="1.05" fill="#f0c655" stroke="#a5761b" stroke-width=".8"/><path d="M11.20 13.85h2.80" stroke="#fbe7a6" stroke-width=".7"/><rect x="5.90" y="12.95" width="4.60" height="2.1" rx="1.05" fill="#f0c655" stroke="#a5761b" stroke-width=".8"/><path d="M6.90 13.85h2.60" stroke="#fbe7a6" stroke-width=".7"/></svg></div><span class="t" style="left:34.42px;top:422px;font-size:12px;color:#000;letter-spacing:-0.050px;">Factura o abono</span><div style="left:29px;top:440px;width:1px;height:24px;background:#e1e4e8;"></div><div style="left:7px;top:444px;width:16px;height:16px"><svg width="16" height="16" viewBox="0 0 16 16"><path d="M.5 2.5h5v-2h7v7h3v8h-15z" fill="#dcab58" stroke="#c79238" stroke-width="1" stroke-linejoin="round"/><path d="M2 5h1.5M2 8h1.5M2 13h3M11 13h1.5M13.5 13h1M13 10h1.5M7.5 2.5h1.5M10.5 2.5h1M2 10.5h1" stroke="#f6e6c2" stroke-width="1.6"/><rect x="7" y="12.5" width="1.3" height="3" fill="#fff"/><path d="M5.5 4.3h5.3v-1.6l4.2 3-4.2 3v-1.6h-5.3z" fill="#a3d843" stroke="#7fb52a" stroke-width=".6" stroke-linejoin="round"/><path d="M6 5.2h5" stroke="#d4f09a" stroke-width=".8"/><path d="M11.5 8.6h-5.8v-1.6l-4.2 3 4.2 3v-1.6h5.8z" fill="#f3a92f" stroke="#d4861c" stroke-width=".6" stroke-linejoin="round"/><path d="M5 9.5h6" stroke="#fbd88a" stroke-width=".8"/></svg></div><span class="t" style="left:34.80px;top:446px;font-size:12px;color:#000;letter-spacing:-0.063px;">Gasto o ingreso del arrendador / perceptor</span><div style="left:29px;top:464px;width:1px;height:24px;background:#e1e4e8;"></div><div style="left:7px;top:468px;width:16px;height:16px"><svg width="16" height="16" viewBox="0 0 16 16"><defs><radialGradient id="g4" cx=".45" cy=".45" r=".6"><stop offset="0" stop-color="#ffd257"/><stop offset="1" stop-color="#f08d1c"/></radialGradient></defs><rect x="1.5" y=".8" width="12" height="13" fill="#f7f8f8" stroke="#c1c8ca" stroke-width=".7"/><path d="M2.4 2l2.2 4.8 2.2-4.8" stroke="#000" stroke-width="1.4" fill="none"/><rect x="8.3" y="2" width="4.4" height="2.6" fill="#79c468" stroke="#4c9a3c" stroke-width=".6"/><path d="M8.3 6.5h4.5M3 9.5h3.5M3 11.5h2.5M3 9.5h.8M3 11.5h.8" stroke="#aab7b9" stroke-width=".9"/><path d="M2.8 9.5h1M2.8 11.5h1" stroke="#59595a" stroke-width=".9"/><circle cx="11.5" cy="11.3" r="4" fill="url(#g4)" stroke="#e48a1e" stroke-width=".8" stroke-dasharray="1.7 .5"/><path d="M9.6 12.7l3.6-3" stroke="#d0820f" stroke-width="1.2"/></svg></div><span class="t" style="left:34.42px;top:470px;font-size:12px;color:#000;letter-spacing:0.068px;">Pago de liquidación</span><div style="left:29px;top:488px;width:1px;height:3px;background:#e1e4e8;"></div><div style="left:35px;top:489px;width:250px;height:1px;background:repeating-linear-gradient(90deg,#c2c6cc 0,#c2c6cc 2px,transparent 2px,transparent 4px);"></div><div style="left:29px;top:491px;width:1px;height:24px;background:#e1e4e8;"></div><div style="left:7px;top:495px;width:16px;height:16px"><svg width="16" height="16" viewBox="0 0 16 16"><rect x=".7" y=".7" width="14.8" height="13.8" rx=".8" fill="#dfe3ea" stroke="#b4bccb" stroke-width="1.4"/><rect x="2.3" y="2.3" width="11.6" height="10.6" fill="#e9ecf1" stroke="#c9cfda" stroke-width=".7"/><path d="M3.5 4.2l2 1.3-2 1.3M5.5 5.5h3.8l-1.8-1.2M9.3 5.5l-1.8 1.2" stroke="#bcc3cf" stroke-width=".9" fill="none"/><circle cx="8" cy="9.6" r="1.8" fill="#7c819c"/><circle cx="7.6" cy="9.2" r=".7" fill="#9aa0b8"/><rect x="13.4" y="3" width="1.5" height="2.6" fill="#9aa2b3"/><path d="M1.5 15.2h2.5M12.5 15.2h2.5" stroke="#8f97a8" stroke-width="1"/><path d="M12.4 9.3v6.4M9.2 12.5h6.4" stroke="#2a9b2a" stroke-width="3.2" stroke-linecap="round"/><path d="M12.4 9.8v5.4M9.7 12.5h5.4" stroke="#4fd44a" stroke-width="1.8" stroke-linecap="round"/><path d="M12 10.2v2h-2" stroke="#b2f2a8" stroke-width=".7" fill="none"/></svg></div><span class="t" style="left:34.29px;top:497px;font-size:12px;color:#000;letter-spacing:-0.166px;">Ingreso de fianza</span></div></div><div class="red" style="left:1092px;top:574px;width:124px;height:23px;"></div>
<div class="menu" style="left:634px;top:556px;width:288px;height:514px;"><div style="left:-1px;top:-1px;width:0;height:0"><div class="mh" style="left:2px;top:2px;width:284px;height:30px;"></div><span class="t" style="left:7.71px;top:11px;font-size:12px;color:#000;font-weight:700;transform:scaleX(0.9426);transform-origin:0.49px 0;">Comunidades</span><div style="left:29px;top:32px;width:1px;height:24px;background:#e1e4e8;"></div><div style="left:7px;top:36px;width:16px;height:16px"><svg width="16" height="16" viewBox="0 0 16 16"><defs><linearGradient id="g1" x1="0" y1="0" x2="0" y2="1"><stop offset="0" stop-color="#f7fcfc"/><stop offset="1" stop-color="#c0dfdf"/></linearGradient></defs><ellipse cx="7.5" cy="15.5" rx="7.5" ry=".6" fill="#444" opacity=".55"/><path d="M2.5 .5l1 1 1-1 1 1 1-1 1 1 1-1 1 1 1-1 1 1 1-1v14.8l-1-1-1 1-1-1-1 1-1-1-1 1-1-1-1 1-1-1-1 1z" fill="url(#g1)" stroke="#566c6c" stroke-width="1" stroke-linejoin="round"/><path d="M4.5 4.5h4M4.5 6.5h6.5M4.5 8.5h6.5M4.5 10.5h4" stroke="#3f8a8a" stroke-width="1.1"/></svg></div><span class="t" style="left:34.42px;top:38px;font-size:12px;color:#000;letter-spacing:-0.133px;">Recibo</span><div style="left:29px;top:56px;width:1px;height:24px;background:#e1e4e8;"></div><div style="left:7px;top:60px;width:16px;height:16px"><svg width="16" height="16" viewBox="0 0 16 16"><defs><radialGradient id="g2" cx=".45" cy=".45" r=".6"><stop offset="0" stop-color="#fcf2fb"/><stop offset="1" stop-color="#e69fd8"/></radialGradient></defs><ellipse cx="7.5" cy="14.5" rx="7" ry=".6" fill="#444" opacity=".5"/><g fill="#c265b3" stroke="#c265b3" stroke-width="1.5"><ellipse cx="6.8" cy="8" rx="6.3" ry="4.9"/><circle cx="13.6" cy="7.8" r="2"/><ellipse cx="10.6" cy="3.2" rx="1.5" ry="2.5" transform="rotate(-28 10.6 3.2)"/><rect x="1.8" y="10" width="3.6" height="3.8" rx="1"/><rect x="8.3" y="10" width="3.6" height="3.8" rx="1"/></g><g fill="url(#g2)"><ellipse cx="6.8" cy="8" rx="6.3" ry="4.9"/><circle cx="13.6" cy="7.8" r="2"/><ellipse cx="10.6" cy="3.2" rx="1.5" ry="2.5" transform="rotate(-28 10.6 3.2)"/><rect x="1.8" y="10" width="3.6" height="3.8" rx="1"/><rect x="8.3" y="10" width="3.6" height="3.8" rx="1"/></g><ellipse cx="6.5" cy="8.5" rx="4" ry="2.8" fill="#fff" opacity=".55"/><path d="M9.5 2.5l2.3 3.8" stroke="#c265b3" stroke-width=".9"/><path d="M3.8 4.6h2.6" stroke="#c876bd" stroke-width="1"/></svg></div><span class="t" style="left:34.79px;top:62px;font-size:12px;color:#000;letter-spacing:0.126px;">Cobro anticipado</span><div style="left:29px;top:80px;width:1px;height:24px;background:#e1e4e8;"></div><div style="left:7px;top:84px;width:16px;height:16px"><svg width="16" height="16" viewBox="0 0 16 16"><path d="M.5 2.5h5v-2h7v7h3v8h-15z" fill="#dcab58" stroke="#c79238" stroke-width="1" stroke-linejoin="round"/><path d="M2 5h1.5M2 8h1.5M2 13h3M11 13h1.5M13.5 13h1M13 10h1.5M7.5 2.5h1.5M10.5 2.5h1M2 10.5h1" stroke="#f6e6c2" stroke-width="1.6"/><rect x="7" y="12.5" width="1.3" height="3" fill="#fff"/><path d="M5.5 4.3h5.3v-1.6l4.2 3-4.2 3v-1.6h-5.3z" fill="#a3d843" stroke="#7fb52a" stroke-width=".6" stroke-linejoin="round"/><path d="M6 5.2h5" stroke="#d4f09a" stroke-width=".8"/><path d="M11.5 8.6h-5.8v-1.6l-4.2 3 4.2 3v-1.6h5.8z" fill="#f3a92f" stroke="#d4861c" stroke-width=".6" stroke-linejoin="round"/><path d="M5 9.5h6" stroke="#fbd88a" stroke-width=".8"/></svg></div><span class="t" style="left:34.80px;top:86px;font-size:12px;color:#000;letter-spacing:-0.011px;">Gasto o ingreso individual</span><div style="left:29px;top:104px;width:1px;height:3px;background:#e1e4e8;"></div><div style="left:35px;top:105px;width:250px;height:1px;background:repeating-linear-gradient(90deg,#c2c6cc 0,#c2c6cc 2px,transparent 2px,transparent 4px);"></div><div style="left:29px;top:107px;width:1px;height:24px;background:#e1e4e8;"></div><div style="left:7px;top:111px;width:16px;height:16px"><svg width="16" height="16" viewBox="0 0 16 16"><path d="M1.5 .5h8.5l3.5 3.5v11h-12z" fill="#f2f7f8" stroke="#7d9297" stroke-width="1" stroke-linejoin="round"/><path d="M10 .8v3.2h3.2" fill="#fff" stroke="#7d9297" stroke-width=".8"/><rect x="3.5" y="10" width="7" height="2.6" fill="#d3e3ea" stroke="#8ea3a8" stroke-width=".7"/><path d="M3.4 2.8v5.2M6.8 2.8v5.2M3.4 5.4h3.4" stroke="#000" stroke-width="1.5"/><path d="M8.5 6h3M8.5 8h3" stroke="#8b9ea2" stroke-width=".9"/><rect x="10.20" y="8.95" width="4.80" height="2.1" rx="1.05" fill="#f0c655" stroke="#a5761b" stroke-width=".8"/><path d="M11.20 9.85h2.80" stroke="#fbe7a6" stroke-width=".7"/><rect x="10.20" y="10.95" width="4.80" height="2.1" rx="1.05" fill="#f0c655" stroke="#a5761b" stroke-width=".8"/><path d="M11.20 11.85h2.80" stroke="#fbe7a6" stroke-width=".7"/><rect x="10.20" y="12.95" width="4.80" height="2.1" rx="1.05" fill="#f0c655" stroke="#a5761b" stroke-width=".8"/><path d="M11.20 13.85h2.80" stroke="#fbe7a6" stroke-width=".7"/><rect x="5.90" y="12.95" width="4.60" height="2.1" rx="1.05" fill="#f0c655" stroke="#a5761b" stroke-width=".8"/><path d="M6.90 13.85h2.60" stroke="#fbe7a6" stroke-width=".7"/></svg></div><span class="t" style="left:34.42px;top:113px;font-size:12px;color:#000;letter-spacing:-0.050px;">Factura o abono</span><div style="left:29px;top:131px;width:1px;height:24px;background:#e1e4e8;"></div><div style="left:7px;top:135px;width:16px;height:16px"><svg width="16" height="16" viewBox="0 0 16 16"><path d="M.5 2.5h5v-2h7v7h3v8h-15z" fill="#dcab58" stroke="#c79238" stroke-width="1" stroke-linejoin="round"/><path d="M2 5h1.5M2 8h1.5M2 13h3M11 13h1.5M13.5 13h1M13 10h1.5M7.5 2.5h1.5M10.5 2.5h1M2 10.5h1" stroke="#f6e6c2" stroke-width="1.6"/><rect x="7" y="12.5" width="1.3" height="3" fill="#fff"/><path d="M5.5 4.3h5.3v-1.6l4.2 3-4.2 3v-1.6h-5.3z" fill="#a3d843" stroke="#7fb52a" stroke-width=".6" stroke-linejoin="round"/><path d="M6 5.2h5" stroke="#d4f09a" stroke-width=".8"/><path d="M11.5 8.6h-5.8v-1.6l-4.2 3 4.2 3v-1.6h5.8z" fill="#f3a92f" stroke="#d4861c" stroke-width=".6" stroke-linejoin="round"/><path d="M5 9.5h6" stroke="#fbd88a" stroke-width=".8"/></svg></div><span class="t" style="left:34.80px;top:137px;font-size:12px;color:#000;letter-spacing:0.013px;">Gasto o ingreso comunitario</span><div class="mh" style="left:2px;top:155px;width:284px;height:30px;"></div><span class="t" style="left:7.40px;top:164px;font-size:12px;color:#000;font-weight:700;transform:scaleX(0.9468);transform-origin:0.80px 0;">Propios</span><div style="left:29px;top:185px;width:1px;height:24px;background:#e1e4e8;"></div><div style="left:7px;top:189px;width:16px;height:16px"><svg width="16" height="16" viewBox="0 0 16 16"><defs><radialGradient id="g3" cx=".45" cy=".45" r=".6"><stop offset="0" stop-color="#ffd257"/><stop offset="1" stop-color="#f08d1c"/></radialGradient></defs><path d="M1.5 .5h8.5l3.5 3.5v11h-12z" fill="#f2f7f8" stroke="#7d9297" stroke-width="1" stroke-linejoin="round"/><path d="M10 .8v3.2h3.2" fill="#fff" stroke="#7d9297" stroke-width=".8"/><rect x="3.5" y="10" width="7" height="2.6" fill="#d3e3ea" stroke="#8ea3a8" stroke-width=".7"/><path d="M8.5 6h3M8.5 8h3" stroke="#8b9ea2" stroke-width=".9"/><rect x="10.20" y="8.95" width="4.80" height="2.1" rx="1.05" fill="#f0c655" stroke="#a5761b" stroke-width=".8"/><path d="M11.20 9.85h2.80" stroke="#fbe7a6" stroke-width=".7"/><rect x="10.20" y="10.95" width="4.80" height="2.1" rx="1.05" fill="#f0c655" stroke="#a5761b" stroke-width=".8"/><path d="M11.20 11.85h2.80" stroke="#fbe7a6" stroke-width=".7"/><rect x="10.20" y="12.95" width="4.80" height="2.1" rx="1.05" fill="#f0c655" stroke="#a5761b" stroke-width=".8"/><path d="M11.20 13.85h2.80" stroke="#fbe7a6" stroke-width=".7"/><rect x="5.90" y="12.95" width="4.60" height="2.1" rx="1.05" fill="#f0c655" stroke="#a5761b" stroke-width=".8"/><path d="M6.90 13.85h2.60" stroke="#fbe7a6" stroke-width=".7"/><circle cx="4.5" cy="4.5" r="4.3" fill="url(#g3)" stroke="#e48a1e" stroke-width=".8" stroke-dasharray="1.7 .5"/><path d="M2.5 6l3.8-3.2" stroke="#d98a10" stroke-width="1.3"/><path d="M2.8 5.3l3-2.5" stroke="#ffe9a0" stroke-width=".6"/></svg></div><span class="t" style="left:34.42px;top:191px;font-size:12px;color:#000;letter-spacing:0.063px;">Factura o abono emitido</span><div style="left:29px;top:209px;width:1px;height:24px;background:#e1e4e8;"></div><div style="left:7px;top:213px;width:16px;height:16px"><svg width="16" height="16" viewBox="0 0 16 16"><path d="M1.5 .5h8.5l3.5 3.5v11h-12z" fill="#f2f7f8" stroke="#7d9297" stroke-width="1" stroke-linejoin="round"/><path d="M10 .8v3.2h3.2" fill="#fff" stroke="#7d9297" stroke-width=".8"/><rect x="3.5" y="10" width="7" height="2.6" fill="#d3e3ea" stroke="#8ea3a8" stroke-width=".7"/><path d="M3.5 4h1M5.5 4h3M3.5 6h7.5M3.5 8h2.5M7 8h4" stroke="#8b9ea2" stroke-width=".9"/><rect x="10.20" y="8.95" width="4.80" height="2.1" rx="1.05" fill="#f0c655" stroke="#a5761b" stroke-width=".8"/><path d="M11.20 9.85h2.80" stroke="#fbe7a6" stroke-width=".7"/><rect x="10.20" y="10.95" width="4.80" height="2.1" rx="1.05" fill="#f0c655" stroke="#a5761b" stroke-width=".8"/><path d="M11.20 11.85h2.80" stroke="#fbe7a6" stroke-width=".7"/><rect x="10.20" y="12.95" width="4.80" height="2.1" rx="1.05" fill="#f0c655" stroke="#a5761b" stroke-width=".8"/><path d="M11.20 13.85h2.80" stroke="#fbe7a6" stroke-width=".7"/><rect x="5.90" y="12.95" width="4.60" height="2.1" rx="1.05" fill="#f0c655" stroke="#a5761b" stroke-width=".8"/><path d="M6.90 13.85h2.60" stroke="#fbe7a6" stroke-width=".7"/></svg></div><span class="t" style="left:34.42px;top:215px;font-size:12px;color:#000;letter-spacing:-0.007px;">Factura o abono recibido</span><div style="left:29px;top:233px;width:1px;height:24px;background:#e1e4e8;"></div><div style="left:7px;top:237px;width:16px;height:16px"><svg width="16" height="16" viewBox="0 0 16 16"><path d="M.5 2.5h5v-2h7v7h3v8h-15z" fill="#dcab58" stroke="#c79238" stroke-width="1" stroke-linejoin="round"/><path d="M2 5h1.5M2 8h1.5M2 13h3M11 13h1.5M13.5 13h1M13 10h1.5M7.5 2.5h1.5M10.5 2.5h1M2 10.5h1" stroke="#f6e6c2" stroke-width="1.6"/><rect x="7" y="12.5" width="1.3" height="3" fill="#fff"/><path d="M5.5 4.3h5.3v-1.6l4.2 3-4.2 3v-1.6h-5.3z" fill="#a3d843" stroke="#7fb52a" stroke-width=".6" stroke-linejoin="round"/><path d="M6 5.2h5" stroke="#d4f09a" stroke-width=".8"/><path d="M11.5 8.6h-5.8v-1.6l-4.2 3 4.2 3v-1.6h5.8z" fill="#f3a92f" stroke="#d4861c" stroke-width=".6" stroke-linejoin="round"/><path d="M5 9.5h6" stroke="#fbd88a" stroke-width=".8"/></svg></div><span class="t" style="left:34.80px;top:239px;font-size:12px;color:#000;letter-spacing:-0.052px;">Gasto o ingreso propio</span><div class="mh" style="left:2px;top:257px;width:284px;height:30px;"></div><span class="t" style="left:7.40px;top:266px;font-size:12px;color:#000;font-weight:700;letter-spacing:-0.180px;">Expedientes</span><div style="left:29px;top:287px;width:1px;height:24px;background:#e1e4e8;"></div><div style="left:7px;top:291px;width:16px;height:16px"><svg width="16" height="16" viewBox="0 0 16 16"><rect x=".7" y=".7" width="14.8" height="13.8" rx=".8" fill="#dfe3ea" stroke="#b4bccb" stroke-width="1.4"/><rect x="2.3" y="2.3" width="11.6" height="10.6" fill="#e9ecf1" stroke="#c9cfda" stroke-width=".7"/><path d="M3.5 4.2l2 1.3-2 1.3M5.5 5.5h3.8l-1.8-1.2M9.3 5.5l-1.8 1.2" stroke="#bcc3cf" stroke-width=".9" fill="none"/><circle cx="8" cy="9.6" r="1.8" fill="#7c819c"/><circle cx="7.6" cy="9.2" r=".7" fill="#9aa0b8"/><rect x="13.4" y="3" width="1.5" height="2.6" fill="#9aa2b3"/><path d="M1.5 15.2h2.5M12.5 15.2h2.5" stroke="#8f97a8" stroke-width="1"/><path d="M12.4 9.3v6.4M9.2 12.5h6.4" stroke="#2a9b2a" stroke-width="3.2" stroke-linecap="round"/><path d="M12.4 9.8v5.4M9.7 12.5h5.4" stroke="#4fd44a" stroke-width="1.8" stroke-linecap="round"/><path d="M12 10.2v2h-2" stroke="#b2f2a8" stroke-width=".7" fill="none"/></svg></div><span class="t" style="left:34.29px;top:293px;font-size:12px;color:#000;letter-spacing:-0.009px;">Ingreso del cliente</span><div style="left:29px;top:311px;width:1px;height:24px;background:#e1e4e8;"></div><div class="hl" style="left:2px;top:311px;width:284px;height:24px;"></div><div style="left:7px;top:315px;width:16px;height:16px"><svg width="16" height="16" viewBox="0 0 16 16"><rect x=".7" y=".7" width="14.8" height="13.8" rx=".8" fill="#dfe3ea" stroke="#b4bccb" stroke-width="1.4"/><rect x="2.3" y="2.3" width="11.6" height="10.6" fill="#e9ecf1" stroke="#c9cfda" stroke-width=".7"/><path d="M3.5 4.2l2 1.3-2 1.3M5.5 5.5h3.8l-1.8-1.2M9.3 5.5l-1.8 1.2" stroke="#bcc3cf" stroke-width=".9" fill="none"/><circle cx="8" cy="9.6" r="1.8" fill="#7c819c"/><circle cx="7.6" cy="9.2" r=".7" fill="#9aa0b8"/><rect x="13.4" y="3" width="1.5" height="2.6" fill="#9aa2b3"/><path d="M1.5 15.2h2.5M12.5 15.2h2.5" stroke="#8f97a8" stroke-width="1"/><rect x="11.2" y="13.5" width="4.6" height="2.4" rx="1.2" fill="#f2c753" stroke="#b17f1d" stroke-width=".7"/><path d="M12.2 14.4h2.5999999999999996" stroke="#fde9a8" stroke-width=".6"/><rect x="11.2" y="11.5" width="4.6" height="2.4" rx="1.2" fill="#f2c753" stroke="#b17f1d" stroke-width=".7"/><path d="M12.2 12.4h2.5999999999999996" stroke="#fde9a8" stroke-width=".6"/><rect x="11.2" y="9.5" width="4.6" height="2.4" rx="1.2" fill="#f2c753" stroke="#b17f1d" stroke-width=".7"/><path d="M12.2 10.4h2.5999999999999996" stroke="#fde9a8" stroke-width=".6"/><rect x="11.2" y="7.5" width="4.6" height="2.4" rx="1.2" fill="#f2c753" stroke="#b17f1d" stroke-width=".7"/><path d="M12.2 8.4h2.5999999999999996" stroke="#fde9a8" stroke-width=".6"/><rect x="11.2" y="5.5" width="4.6" height="2.4" rx="1.2" fill="#f2c753" stroke="#b17f1d" stroke-width=".7"/><path d="M12.2 6.4h2.5999999999999996" stroke="#fde9a8" stroke-width=".6"/><rect x="7" y="13.5" width="4.6" height="2.4" rx="1.2" fill="#f2c753" stroke="#b17f1d" stroke-width=".7"/><path d="M8 14.4h2.5999999999999996" stroke="#fde9a8" stroke-width=".6"/><rect x="7" y="11.5" width="4.6" height="2.4" rx="1.2" fill="#f2c753" stroke="#b17f1d" stroke-width=".7"/><path d="M8 12.4h2.5999999999999996" stroke="#fde9a8" stroke-width=".6"/><rect x="7" y="9.5" width="4.6" height="2.4" rx="1.2" fill="#f2c753" stroke="#b17f1d" stroke-width=".7"/><path d="M8 10.4h2.5999999999999996" stroke="#fde9a8" stroke-width=".6"/></svg></div><span class="t" style="left:34.80px;top:317px;font-size:12px;color:#000;letter-spacing:0.146px;">Gasto/Abono</span><div class="mh" style="left:2px;top:335px;width:284px;height:30px;"></div><span class="t" style="left:7.90px;top:344px;font-size:12px;color:#000;font-weight:700;letter-spacing:-0.248px;">Alquileres</span><div style="left:29px;top:365px;width:1px;height:24px;background:#e1e4e8;"></div><div style="left:7px;top:369px;width:16px;height:16px"><svg width="16" height="16" viewBox="0 0 16 16"><ellipse cx="7.5" cy="15.5" rx="7.5" ry=".6" fill="#444" opacity=".5"/><path d="M1.5 .5l1 1 1-1 1 1 1-1 1 1 1-1 1 1 1-1 1 1 1-1v14.8l-1-1-1 1-1-1-1 1-1-1-1 1-1-1-1 1-1-1-1 1z" fill="#f1f7f7" stroke="#7b9090" stroke-width=".9" stroke-linejoin="round"/><path d="M3.5 4.5h3.5M3.5 6.5h3M3.5 8.5h2M3.5 10.5h2M3.5 12.5h2" stroke="#94b5b5" stroke-width=".9"/><rect x="8" y="6.5" width="5" height="8.3" fill="#3c4048" stroke="#23262b" stroke-width=".6"/><path d="M13 5.5l2.5 1v9l-2.5-.7z" fill="#e3a24b" stroke="#b87728" stroke-width=".6"/><path d="M9 8.6l-3.5 2.4 3.5 2.4v-1.4h1.5v-2h-1.5z" fill="#f59a1e" stroke="#cf7a10" stroke-width=".4"/><path d="M10.5 8.6l3 2.4-3 2.4z" fill="#a2dc3c" stroke="#79b424" stroke-width=".4"/></svg></div><span class="t" style="left:34.42px;top:371px;font-size:12px;color:#000;letter-spacing:-0.133px;">Recibo</span><div style="left:29px;top:389px;width:1px;height:24px;background:#e1e4e8;"></div><div style="left:7px;top:393px;width:16px;height:16px"><svg width="16" height="16" viewBox="0 0 16 16"><defs><radialGradient id="g2" cx=".45" cy=".45" r=".6"><stop offset="0" stop-color="#fcf2fb"/><stop offset="1" stop-color="#e69fd8"/></radialGradient></defs><ellipse cx="7.5" cy="14.5" rx="7" ry=".6" fill="#444" opacity=".5"/><g fill="#c265b3" stroke="#c265b3" stroke-width="1.5"><ellipse cx="6.8" cy="8" rx="6.3" ry="4.9"/><circle cx="13.6" cy="7.8" r="2"/><ellipse cx="10.6" cy="3.2" rx="1.5" ry="2.5" transform="rotate(-28 10.6 3.2)"/><rect x="1.8" y="10" width="3.6" height="3.8" rx="1"/><rect x="8.3" y="10" width="3.6" height="3.8" rx="1"/></g><g fill="url(#g2)"><ellipse cx="6.8" cy="8" rx="6.3" ry="4.9"/><circle cx="13.6" cy="7.8" r="2"/><ellipse cx="10.6" cy="3.2" rx="1.5" ry="2.5" transform="rotate(-28 10.6 3.2)"/><rect x="1.8" y="10" width="3.6" height="3.8" rx="1"/><rect x="8.3" y="10" width="3.6" height="3.8" rx="1"/></g><ellipse cx="6.5" cy="8.5" rx="4" ry="2.8" fill="#fff" opacity=".55"/><path d="M9.5 2.5l2.3 3.8" stroke="#c265b3" stroke-width=".9"/><path d="M3.8 4.6h2.6" stroke="#c876bd" stroke-width="1"/></svg></div><span class="t" style="left:34.79px;top:395px;font-size:12px;color:#000;letter-spacing:0.126px;">Cobro anticipado</span><div style="left:29px;top:413px;width:1px;height:3px;background:#e1e4e8;"></div><div style="left:35px;top:414px;width:250px;height:1px;background:repeating-linear-gradient(90deg,#c2c6cc 0,#c2c6cc 2px,transparent 2px,transparent 4px);"></div><div style="left:29px;top:416px;width:1px;height:24px;background:#e1e4e8;"></div><div style="left:7px;top:420px;width:16px;height:16px"><svg width="16" height="16" viewBox="0 0 16 16"><path d="M1.5 .5h8.5l3.5 3.5v11h-12z" fill="#f2f7f8" stroke="#7d9297" stroke-width="1" stroke-linejoin="round"/><path d="M10 .8v3.2h3.2" fill="#fff" stroke="#7d9297" stroke-width=".8"/><rect x="3.5" y="10" width="7" height="2.6" fill="#d3e3ea" stroke="#8ea3a8" stroke-width=".7"/><path d="M3 3l2 4.3 2-4.3" stroke="#000" stroke-width="1.1" fill="none"/><path d="M8.5 6h3M8.5 8h3" stroke="#8b9ea2" stroke-width=".9"/><rect x="10.20" y="8.95" width="4.80" height="2.1" rx="1.05" fill="#f0c655" stroke="#a5761b" stroke-width=".8"/><path d="M11.20 9.85h2.80" stroke="#fbe7a6" stroke-width=".7"/><rect x="10.20" y="10.95" width="4.80" height="2.1" rx="1.05" fill="#f0c655" stroke="#a5761b" stroke-width=".8"/><path d="M11.20 11.85h2.80" stroke="#fbe7a6" stroke-width=".7"/><rect x="10.20" y="12.95" width="4.80" height="2.1" rx="1.05" fill="#f0c655" stroke="#a5761b" stroke-width=".8"/><path d="M11.20 13.85h2.80" stroke="#fbe7a6" stroke-width=".7"/><rect x="5.90" y="12.95" width="4.60" height="2.1" rx="1.05" fill="#f0c655" stroke="#a5761b" stroke-width=".8"/><path d="M6.90 13.85h2.60" stroke="#fbe7a6" stroke-width=".7"/></svg></div><span class="t" style="left:34.42px;top:422px;font-size:12px;color:#000;letter-spacing:-0.050px;">Factura o abono</span><div style="left:29px;top:440px;width:1px;height:24px;background:#e1e4e8;"></div><div style="left:7px;top:444px;width:16px;height:16px"><svg width="16" height="16" viewBox="0 0 16 16"><path d="M.5 2.5h5v-2h7v7h3v8h-15z" fill="#dcab58" stroke="#c79238" stroke-width="1" stroke-linejoin="round"/><path d="M2 5h1.5M2 8h1.5M2 13h3M11 13h1.5M13.5 13h1M13 10h1.5M7.5 2.5h1.5M10.5 2.5h1M2 10.5h1" stroke="#f6e6c2" stroke-width="1.6"/><rect x="7" y="12.5" width="1.3" height="3" fill="#fff"/><path d="M5.5 4.3h5.3v-1.6l4.2 3-4.2 3v-1.6h-5.3z" fill="#a3d843" stroke="#7fb52a" stroke-width=".6" stroke-linejoin="round"/><path d="M6 5.2h5" stroke="#d4f09a" stroke-width=".8"/><path d="M11.5 8.6h-5.8v-1.6l-4.2 3 4.2 3v-1.6h5.8z" fill="#f3a92f" stroke="#d4861c" stroke-width=".6" stroke-linejoin="round"/><path d="M5 9.5h6" stroke="#fbd88a" stroke-width=".8"/></svg></div><span class="t" style="left:34.80px;top:446px;font-size:12px;color:#000;letter-spacing:-0.063px;">Gasto o ingreso del arrendador / perceptor</span><div style="left:29px;top:464px;width:1px;height:24px;background:#e1e4e8;"></div><div style="left:7px;top:468px;width:16px;height:16px"><svg width="16" height="16" viewBox="0 0 16 16"><defs><radialGradient id="g5" cx=".45" cy=".45" r=".6"><stop offset="0" stop-color="#ffd257"/><stop offset="1" stop-color="#f08d1c"/></radialGradient></defs><rect x="1.5" y=".8" width="12" height="13" fill="#f7f8f8" stroke="#c1c8ca" stroke-width=".7"/><path d="M2.9 1.8v5M6.3 1.8v5M2.9 4.3h3.4" stroke="#000" stroke-width="1.5" fill="none"/><rect x="8.3" y="2" width="4.4" height="2.6" fill="#79c468" stroke="#4c9a3c" stroke-width=".6"/><path d="M8.3 6.5h4.5M3 9.5h3.5M3 11.5h2.5M3 9.5h.8M3 11.5h.8" stroke="#aab7b9" stroke-width=".9"/><path d="M2.8 9.5h1M2.8 11.5h1" stroke="#59595a" stroke-width=".9"/><circle cx="11.5" cy="11.3" r="4" fill="url(#g5)" stroke="#e48a1e" stroke-width=".8" stroke-dasharray="1.7 .5"/><path d="M9.6 12.7l3.6-3" stroke="#d0820f" stroke-width="1.2"/></svg></div><span class="t" style="left:34.42px;top:470px;font-size:12px;color:#000;letter-spacing:0.068px;">Pago de liquidación</span><div style="left:29px;top:488px;width:1px;height:24px;background:#e1e4e8;"></div><div style="left:7px;top:492px;width:16px;height:16px"><svg width="16" height="16" viewBox="0 0 16 16"><rect x=".7" y=".7" width="14.8" height="13.8" rx=".8" fill="#dfe3ea" stroke="#b4bccb" stroke-width="1.4"/><rect x="2.3" y="2.3" width="11.6" height="10.6" fill="#e9ecf1" stroke="#c9cfda" stroke-width=".7"/><path d="M3.5 4.2l2 1.3-2 1.3M5.5 5.5h3.8l-1.8-1.2M9.3 5.5l-1.8 1.2" stroke="#bcc3cf" stroke-width=".9" fill="none"/><circle cx="8" cy="9.6" r="1.8" fill="#7c819c"/><circle cx="7.6" cy="9.2" r=".7" fill="#9aa0b8"/><rect x="13.4" y="3" width="1.5" height="2.6" fill="#9aa2b3"/><path d="M1.5 15.2h2.5M12.5 15.2h2.5" stroke="#8f97a8" stroke-width="1"/><path d="M12.4 9.3v6.4M9.2 12.5h6.4" stroke="#2a9b2a" stroke-width="3.2" stroke-linecap="round"/><path d="M12.4 9.8v5.4M9.7 12.5h5.4" stroke="#4fd44a" stroke-width="1.8" stroke-linecap="round"/><path d="M12 10.2v2h-2" stroke="#b2f2a8" stroke-width=".7" fill="none"/></svg></div><span class="t" style="left:34.29px;top:494px;font-size:12px;color:#000;letter-spacing:-0.166px;">Ingreso de fianza</span></div></div><div class="red" style="left:636px;top:868px;width:129px;height:22px;"></div>
</body></html>
